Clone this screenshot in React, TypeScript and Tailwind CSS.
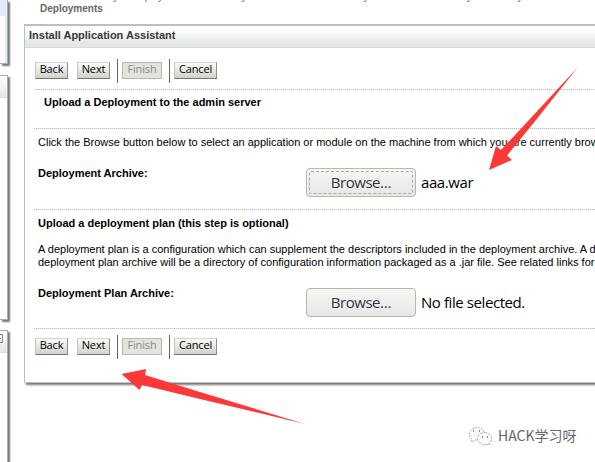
import React from 'react';

function Divider({ className = '' }: { className?: string }) {
  return <div className={`h-px shrink-0 bg-[repeating-linear-gradient(90deg,#bdbdbd_0_1px,#ececec_1px_2px)] ${className}`} />;
}

const buttonBase = 'h-[17px] shrink-0 border font-["Open_Sans",sans-serif] text-[11px] leading-[12px] tracking-[-0.15px] text-center whitespace-nowrap px-0 pt-0 pb-[3px]';
const active = 'border-t-[#d2d4ca] border-l-[#c2c4ba] border-r-[#8d8f89] border-b-[#73756f] bg-linear-to-b from-[#fbfbf9] to-[#d1d2cb] text-black';
const disabled = 'border-[#b5b8ae] bg-[#e2e4dd] text-[#8b8c87]';

function ButtonRow() {
  return (
    <div className="flex h-[24px] shrink-0 items-start pl-[10px]">
      <button className={`${buttonBase} ${active} mt-[3px] w-[33px]`}>Back</button>
      <button className={`${buttonBase} ${active} mt-[3px] ml-[9px] w-[33px]`}>Next</button>
      <span className="ml-[7px] h-[24px] w-px bg-[#626262]" />
      <button className={`${buttonBase} ${disabled} mt-[3px] ml-[4px] w-[40px]`}>Finish</button>
      <span className="ml-[7px] h-[24px] w-px bg-[#626262]" />
      <button className={`${buttonBase} ${active} mt-[3px] ml-[4px] w-[43px]`}>Cancel</button>
    </div>
  );
}

function FileRow({ label, value, focused = false }: { label: string; value: string; focused?: boolean }) {
  return (
    <div className="flex h-[29px] shrink-0 pl-[13px]">
      <div className="-mt-[1px] w-[268px] shrink-0 text-[11px] leading-[13px] font-bold">{label}</div>
      <button className="h-[29px] w-[110px] shrink-0 rounded-[4px] border border-[#bbb5aa] bg-linear-to-b from-[#f7f6f5] to-[#e9e7e5] p-[2px] font-['Open_Sans',sans-serif] text-[15px] tracking-[-0.45px] text-[#303638]">
        <span className={`flex h-full items-center justify-center rounded-[2px] border border-dashed ${focused ? 'border-[#aaa9a7]' : 'border-transparent'}`}>Browse…</span>
      </button>
      <span className="ml-[5px] font-['Open_Sans',sans-serif] text-[15px] leading-[29px] tracking-[-0.42px] whitespace-nowrap">{value}</span>
    </div>
  );
}

function Sidebar() {
  const panel = 'w-[8px] shrink-0 border-r border-[#a7adb2] shadow-[2px_2px_2px_#777]';
  return (
    <aside className="flex h-full w-[24px] shrink-0 flex-col">
      <div className={`${panel} h-[64px] border-b bg-white`}>
        <div className="h-[16px] bg-[#e3eafa]" />
        <div className="ml-[5px] h-[47px] bg-[#e3eafa]" />
      </div>
      <div className={`${panel} mt-[11px] h-[245px] border-y bg-white`}>
        <div className="h-[22px] border-b border-[#ddd] bg-linear-to-b from-white to-[#e5e7e4]" />
      </div>
      <div className={`${panel} mt-[10px] h-[140px] border-t bg-white`}>
        <div className="h-[22px] border-b border-[#ddd] bg-linear-to-b from-white to-[#e5e7e4] pt-[3px]">
          <div className="h-[9px] w-[3px] border border-l-0 border-[#888] pt-[3px]"><div className="h-px w-px bg-[#777]" /></div>
        </div>
      </div>
    </aside>
  );
}

export default function App() {
  return (
    <div className="relative flex h-[462px] w-[595px] overflow-hidden bg-white font-['Liberation_Sans',Arial,sans-serif] text-black">
      <Sidebar />
      <main className="flex min-w-0 flex-1 flex-col">
        <nav className="h-[24px] shrink-0 pl-[16px] text-[10px] leading-[12px] text-[#666]">
          <div className="-mt-[9px] flex h-[12px] whitespace-nowrap">
            <span className="w-[158px] shrink-0">Home &gt;Summary of Deployments</span>
            <span className="w-[122px] shrink-0">&gt;Summary</span>
            <span className="w-[103px] shrink-0">&gt;Summary</span>
            <span className="w-[51px] shrink-0">&gt;Summary</span>
            <span>&gt;Summary</span>
          </div>
          <div className="font-bold">Deployments</div>
        </nav>
        <section className="flex h-[359px] w-[580px] shrink-0 flex-col border border-t-2 border-[#b9c1c4] shadow-[2px_2px_2px_#777]">
          <h1 className="h-[22px] shrink-0 border-b border-[#d7dad7] bg-linear-to-b from-white from-15% to-[#e3e6e3] to-85% pl-[4px] text-[11px] leading-[18px] font-bold text-[#393939]">Install Application Assistant</h1>
          <div className="h-[11px] shrink-0" />
          <ButtonRow />
          <Divider className="mt-[6px] ml-[10px]" />
          <h2 className="h-[38px] shrink-0 pt-[6px] pl-[19px] text-[11px] leading-[13px] font-bold">Upload a Deployment to the admin server</h2>
          <Divider className="ml-[9px]" />
          <p className="h-[39px] shrink-0 pt-[7px] pl-[13px] text-[11px] leading-[13px] whitespace-nowrap">Click the Browse button below to select an application or module on the machine from which you are currently browsing.</p>
          <FileRow label="Deployment Archive:" value="aaa.war" focused />
          <Divider className="mt-[12px] ml-[9px]" />
          <h2 className="h-[33px] shrink-0 pt-[7px] pl-[13px] text-[11px] leading-[13px] font-bold">Upload a deployment plan (this step is optional)</h2>
          <p className="h-[45px] shrink-0 pl-[13px] text-[11px] leading-[13px] whitespace-nowrap">A deployment plan is a configuration which can supplement the descriptors included in the deployment archive. A deployment<br />deployment plan archive will be a directory of configuration information packaged as a .jar file. See related links for additional</p>
          <FileRow label="Deployment Plan Archive:" value="No file selected." />
          <Divider className="mt-[11px] mb-[6px] ml-[9px]" />
          <ButtonRow />
        </section>
        <footer className="mt-[41px] flex items-start pl-[444px]">
          <svg className="mt-[2px] h-[21px] w-[26px] shrink-0" viewBox="0 0 26 21" fill="none" stroke="#999" strokeWidth=".8">
            <path d="M16 6C14 1 7 0 3 4C0 7 1 11 4 13L3 16L7 14L9 14" strokeDasharray="2 1" />
            <path d="M21 18C16 20 10 17 9.5 13C9 7 18 4 22 9C25 12 24 15 21 17L22 19Z" strokeDasharray="3 1" />
            <path d="M5 5h1M11 5h1M14 11h1M19 11h1" stroke="#666" strokeWidth="1.3" />
          </svg>
          <span className="ml-[4px] font-['Noto_Sans_CJK_SC',sans-serif] text-[14px] leading-[22px] whitespace-nowrap text-[#666] [text-shadow:-1px_-1px_0_white]">HACK学习呀</span>
        </footer>
      </main>
      <svg className="pointer-events-none absolute inset-0" width="595" height="462" fill="#fc3838">
        <path d="M489 170L496 146L501 150L529 120L578 67L536 120L507 155.5L512 160Z" />
        <path d="M121.5 374L146 369L145 375L200 392L305 424L200 399L142 385L139.5 390Z" />
      </svg>
    </div>
  );
}
